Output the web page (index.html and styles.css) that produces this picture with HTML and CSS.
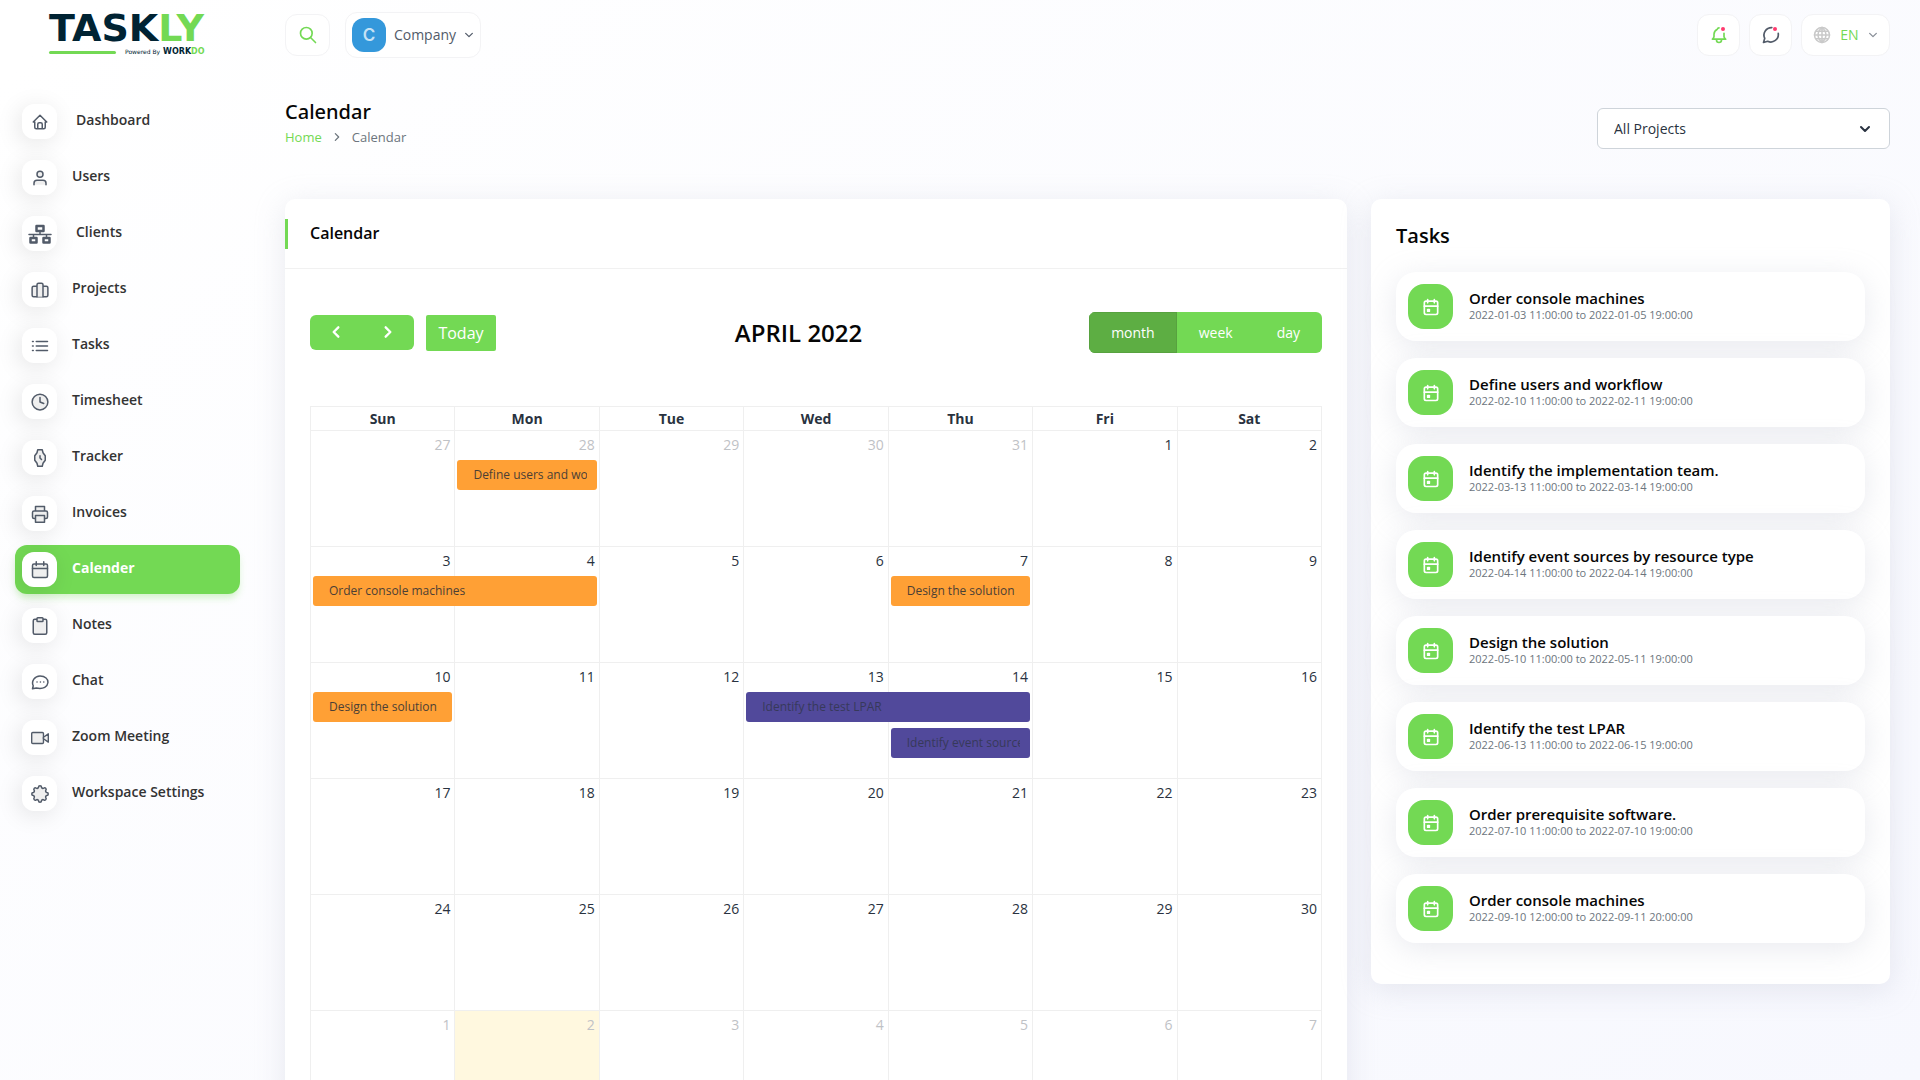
FILE: index.html
```
<!DOCTYPE html>
<html lang="en">
<head>
    <meta charset="utf-8">
    <title>Taskly - Calendar</title>
    <link rel="stylesheet" href="styles.css">
</head>
<body>
    <!-- icon set -->
    <svg class="sprite" aria-hidden="true">
        <symbol id="i-home" viewBox="0 0 24 24"><path d="M5 12H3l9-9 9 9h-2M5 12v7a2 2 0 0 0 2 2h10a2 2 0 0 0 2-2v-7M9 21v-6a2 2 0 0 1 2-2h2a2 2 0 0 1 2 2v6"/></symbol>
        <symbol id="i-user" viewBox="0 0 24 24"><circle cx="12" cy="7" r="4"/><path d="M4 21v-2a4 4 0 0 1 4-4h8a4 4 0 0 1 4 4v2"/></symbol>
        <symbol id="i-network" viewBox="0 0 24 20"><path d="M1 10.500h22M12 7v3.500M5.500 10.500v3M18.500 10.500v3" stroke-width="1.500"/><g fill="#fff" stroke-width="2.500"><rect x="8.500" y="2" width="7" height="5"/><rect x="2.500" y="14" width="6" height="4.500"/><rect x="15.500" y="14" width="6" height="4.500"/></g></symbol>
        <symbol id="i-luggage" viewBox="0 0 24 24"><rect x="1.500" y="7" width="21" height="14" rx="2"/><path d="M8 21V5a2 2 0 0 1 2-2h4a2 2 0 0 1 2 2v16"/></symbol>
        <symbol id="i-list" viewBox="0 0 24 24"><path d="M7 6h15M7 12h15M7 18h15M2 6h1M2 12h1M2 18h1"/></symbol>
        <symbol id="i-clock" viewBox="0 0 24 24"><circle cx="12" cy="12" r="10.500"/><path d="M12 6v6l5 2"/></symbol>
        <symbol id="i-watch" viewBox="0 0 24 24"><path d="M8 5l1-4h6l1 4 3 4v6l-3 4-1 4H9l-1-4-3-4V9zM12 9v3l2 2"/></symbol>
        <symbol id="i-printer" viewBox="0 0 24 24"><path d="M6 8V2h12v6M6 18H4a2 2 0 0 1-2-2v-6a2 2 0 0 1 2-2h16a2 2 0 0 1 2 2v6a2 2 0 0 1-2 2h-2"/><rect x="6" y="14" width="12" height="9"/></symbol>
        <symbol id="i-calendar" viewBox="0 0 24 24"><rect x="2" y="4" width="20" height="18" rx="2"/><path d="M7 1v5M17 1v5M2 10h20"/></symbol>
        <symbol id="i-clipboard" viewBox="0 0 24 24"><rect x="3" y="3" width="18" height="20" rx="2"/><rect x="8" y="1" width="8" height="5" rx="1"/></symbol>
        <symbol id="i-chat" viewBox="0 0 24 24"><path d="M2 21l1-4C0 11 5 4 12 4s11 4 10.500 9S17 22 7 20zM8 12h.1M12.500 12h.1M17 12h.1"/></symbol>
        <symbol id="i-video" viewBox="0 0 26 24"><rect x="1" y="4" width="17" height="16" rx="1.500"/><path d="M18 11l7-5v12l-7-5z"/></symbol>
        <symbol id="i-gear" viewBox="0 0 24 24"><path d="M10 3a2 2 0 0 1 4 0 2 2 0 0 0 3 1.200 2 2 0 0 1 2.800 2.800A2 2 0 0 0 21 10a2 2 0 0 1 0 4 2 2 0 0 0-1.200 3 2 2 0 0 1-2.800 2.800A2 2 0 0 0 14 21a2 2 0 0 1-4 0 2 2 0 0 0-3-1.200A2 2 0 0 1 4.200 17 2 2 0 0 0 3 14a2 2 0 0 1 0-4 2 2 0 0 0 1.200-3A2 2 0 0 1 7 4.200 2 2 0 0 0 10 3z"/></symbol>
        <symbol id="i-event" viewBox="0 0 24 24"><rect x="4" y="5" width="16" height="16" rx="2"/><path d="M8 3v4M16 3v4M4 11h16"/><rect x="8" y="15" width="2" height="2"/></symbol>
        <symbol id="i-search" viewBox="0 0 24 24"><circle cx="10" cy="10" r="7"/><path d="M21 21l-6-6"/></symbol>
        <symbol id="i-bell" viewBox="0 0 24 24"><path d="M12 3.500a2 2 0 0 0-2 1.500 7 7 0 0 0-4 6v3a4 4 0 0 1-2 3h16a4 4 0 0 1-2-3v-4M9 17v1a3 3 0 0 0 6 0v-1"/></symbol>
        <symbol id="i-bubble" viewBox="0 0 24 24"><path d="M13 3.100A9 9 0 0 0 4.500 16L3 21l5-1.500A9 9 0 0 0 20.700 10"/></symbol>
        <symbol id="i-globe" viewBox="0 0 24 24"><circle cx="12" cy="12" r="10"/><path d="M2 12h20M4 7h16M4 17h16M12 2v20M12 2c-7 6-7 14 0 20M12 2c7 6 7 14 0 20"/></symbol>
        <symbol id="i-down" viewBox="0 0 24 24"><path d="M4 8l8 8 8-8"/></symbol>
        <symbol id="i-left" viewBox="0 0 24 24"><path d="M16 4l-8 8 8 8"/></symbol>
        <symbol id="i-right" viewBox="0 0 24 24"><path d="M8 4l8 8-8 8"/></symbol>
    </svg>

    <div class="app">
        <!-- sidebar -->
        <aside class="sidebar">
            <a class="logo" href="#">
                <span class="logo-name">TASK<b>LY</b></span>
                <span class="logo-sub"><i></i><span>Powered By</span><strong>WORK<b>DO</b></strong></span>
            </a>
            <nav class="menu">
                <a class="menu-item spaced" href="#"><span class="menu-icon"><svg class="outline"><use href="#i-home"/></svg></span><span>Dashboard</span></a>
                <a class="menu-item" href="#"><span class="menu-icon"><svg><use href="#i-user"/></svg></span><span>Users</span></a>
                <a class="menu-item spaced" href="#"><span class="menu-icon"><svg class="wide"><use href="#i-network"/></svg></span><span>Clients</span></a>
                <a class="menu-item" href="#"><span class="menu-icon"><svg><use href="#i-luggage"/></svg></span><span>Projects</span></a>
                <a class="menu-item" href="#"><span class="menu-icon"><svg><use href="#i-list"/></svg></span><span>Tasks</span></a>
                <a class="menu-item" href="#"><span class="menu-icon"><svg><use href="#i-clock"/></svg></span><span>Timesheet</span></a>
                <a class="menu-item" href="#"><span class="menu-icon"><svg><use href="#i-watch"/></svg></span><span>Tracker</span></a>
                <a class="menu-item" href="#"><span class="menu-icon"><svg><use href="#i-printer"/></svg></span><span>Invoices</span></a>
                <a class="menu-item active" href="#"><span class="menu-icon"><svg><use href="#i-calendar"/></svg></span><span>Calender</span></a>
                <a class="menu-item" href="#"><span class="menu-icon"><svg><use href="#i-clipboard"/></svg></span><span>Notes</span></a>
                <a class="menu-item" href="#"><span class="menu-icon"><svg class="outline"><use href="#i-chat"/></svg></span><span>Chat</span></a>
                <a class="menu-item" href="#"><span class="menu-icon"><svg><use href="#i-video"/></svg></span><span>Zoom Meeting</span></a>
                <a class="menu-item" href="#"><span class="menu-icon"><svg><use href="#i-gear"/></svg></span><span>Workspace Settings</span></a>
            </nav>
        </aside>

        <div class="content">
            <!-- top bar -->
            <header class="topbar">
                <button class="top-btn search" aria-label="Search"><svg><use href="#i-search"/></svg></button>
                <button class="top-btn company"><span class="avatar">C</span>Company<svg class="chevron"><use href="#i-down"/></svg></button>
                <div class="top-right">
                    <button class="top-btn bell" aria-label="Notifications"><svg><use href="#i-bell"/></svg><span class="dot"></span></button>
                    <button class="top-btn" aria-label="Messages"><svg><use href="#i-bubble"/></svg><span class="dot"></span></button>
                    <button class="top-btn lang"><svg class="globe"><use href="#i-globe"/></svg>EN<svg class="chevron"><use href="#i-down"/></svg></button>
                </div>
            </header>

            <div class="page-header">
                <div>
                    <h1>Calendar</h1>
                    <div class="breadcrumb"><a href="#">Home</a><svg><use href="#i-right"/></svg><span>Calendar</span></div>
                </div>
                <div class="project-select">
                    <select aria-label="Project">
                        <option>All Projects</option>
                    </select>
                    <svg><use href="#i-down"/></svg>
                </div>
            </div>

            <main class="row">
                <section class="card calendar-card">
                    <div class="card-header"><h2>Calendar</h2></div>
                    <div class="card-body">
                        <div class="toolbar">
                            <div class="toolbar-left">
                                <div class="btn-group arrows">
                                    <button aria-label="Previous"><svg><use href="#i-left"/></svg></button>
                                    <button aria-label="Next"><svg><use href="#i-right"/></svg></button>
                                </div>
                                <button class="today-btn">Today</button>
                            </div>
                            <h3>APRIL 2022</h3>
                            <div class="btn-group views">
                                <button class="active">month</button>
                                <button>week</button>
                                <button>day</button>
                            </div>
                        </div>

                        <table class="calendar">
                            <thead>
                                <tr><th>Sun</th><th>Mon</th><th>Tue</th><th>Wed</th><th>Thu</th><th>Fri</th><th>Sat</th></tr>
                            </thead>
                            <tbody>
                                <tr>
                                    <td class="other">27</td>
                                    <td class="other">28<a class="event orange" href="#"><span>Define users and workflow</span></a></td>
                                    <td class="other">29</td>
                                    <td class="other">30</td>
                                    <td class="other">31</td>
                                    <td>1</td>
                                    <td>2</td>
                                </tr>
                                <tr>
                                    <td>3<a class="event orange two-days" href="#"><span>Order console machines</span></a></td>
                                    <td>4</td>
                                    <td>5</td>
                                    <td>6</td>
                                    <td>7<a class="event orange" href="#"><span>Design the solution</span></a></td>
                                    <td>8</td>
                                    <td>9</td>
                                </tr>
                                <tr>
                                    <td>10<a class="event orange" href="#"><span>Design the solution</span></a></td>
                                    <td>11</td>
                                    <td>12</td>
                                    <td>13<a class="event purple two-days" href="#"><span>Identify the test LPAR</span></a></td>
                                    <td>14<a class="event purple second" href="#"><span>Identify event sources by resource type</span></a></td>
                                    <td>15</td>
                                    <td>16</td>
                                </tr>
                                <tr><td>17</td><td>18</td><td>19</td><td>20</td><td>21</td><td>22</td><td>23</td></tr>
                                <tr><td>24</td><td>25</td><td>26</td><td>27</td><td>28</td><td>29</td><td>30</td></tr>
                                <tr>
                                    <td class="other">1</td>
                                    <td class="other today">2</td>
                                    <td class="other">3</td>
                                    <td class="other">4</td>
                                    <td class="other">5</td>
                                    <td class="other">6</td>
                                    <td class="other">7</td>
                                </tr>
                            </tbody>
                        </table>
                    </div>
                </section>

                <section class="card tasks-card">
                    <h2>Tasks</h2>
                    <ul class="task-list">
                        <li><span class="task-icon"><svg><use href="#i-event"/></svg></span><div><h4>Order console machines</h4><p>2022-01-03 11:00:00 to 2022-01-05 19:00:00</p></div></li>
                        <li><span class="task-icon"><svg><use href="#i-event"/></svg></span><div><h4>Define users and workflow</h4><p>2022-02-10 11:00:00 to 2022-02-11 19:00:00</p></div></li>
                        <li><span class="task-icon"><svg><use href="#i-event"/></svg></span><div><h4>Identify the implementation team.</h4><p>2022-03-13 11:00:00 to 2022-03-14 19:00:00</p></div></li>
                        <li><span class="task-icon"><svg><use href="#i-event"/></svg></span><div><h4>Identify event sources by resource type</h4><p>2022-04-14 11:00:00 to 2022-04-14 19:00:00</p></div></li>
                        <li><span class="task-icon"><svg><use href="#i-event"/></svg></span><div><h4>Design the solution</h4><p>2022-05-10 11:00:00 to 2022-05-11 19:00:00</p></div></li>
                        <li><span class="task-icon"><svg><use href="#i-event"/></svg></span><div><h4>Identify the test LPAR</h4><p>2022-06-13 11:00:00 to 2022-06-15 19:00:00</p></div></li>
                        <li><span class="task-icon"><svg><use href="#i-event"/></svg></span><div><h4>Order prerequisite software.</h4><p>2022-07-10 11:00:00 to 2022-07-10 19:00:00</p></div></li>
                        <li><span class="task-icon"><svg><use href="#i-event"/></svg></span><div><h4>Order console machines</h4><p>2022-09-10 12:00:00 to 2022-09-11 20:00:00</p></div></li>
                    </ul>
                </section>
            </main>
        </div>
    </div>
</body>
</html>
```
FILE: styles.css
```
:root {
    --green: #73d954;
    --dark: #293240;
    --gray: #525b69;
}
* {
    box-sizing: border-box;
}
body {
    margin: 0;
    font-family: "Open Sans", "Noto Sans", sans-serif;
    font-size: 14px;
    line-height: 20px;
    color: var(--dark);
    background: linear-gradient(141deg, #ffffff 3%, #f7f8fe 100%) fixed;
}
h1, h2, h3, h4, p, ul {
    margin: 0;
    padding: 0;
}
h1, h2, h3, h4 {
    font-weight: 600;
    color: #060606;
}
a {
    text-decoration: none;
    color: inherit;
}
button, select {
    font: inherit;
    color: inherit;
    cursor: pointer;
}
svg {
    fill: none;
    stroke: currentColor;
    stroke-width: 2;
    stroke-linecap: round;
    stroke-linejoin: round;
}
.sprite {
    display: none;
}
.app {
    display: flex;
    height: 100vh;
    overflow: hidden;
}

/* sidebar */
.sidebar {
    flex: 0 0 255px;
    padding: 0 15px;
}
.logo {
    display: block;
    height: 90px;
    padding: 14px 0 0 34px;
    color: #002333;
}
.logo b {
    color: var(--green);
}
.logo-name {
    display: block;
    font: bold 38px/28px "DejaVu Sans", sans-serif;
}
.logo-sub {
    display: flex;
    align-items: center;
    height: 20px;
    font: 6px/8px "DejaVu Sans", sans-serif;
}
.logo-sub i {
    width: 67px;
    height: 3px;
    margin-right: 9px;
    border-radius: 2px;
    background: var(--green);
}
.logo-sub strong {
    margin-left: 3px;
    font-size: 8px;
}
.menu-item {
    display: flex;
    align-items: center;
    height: 49px;
    margin: 7px 0;
    padding: 0 7px;
    border-radius: 12px;
    font-weight: 600;
    color: #333333;
}
.menu-item > span:last-child {
    padding-bottom: 3px;
}
.menu-item.spaced > span:last-child {
    padding-left: 4px;
}
.menu-item.active {
    color: #ffffff;
    font-weight: 700;
    background: var(--green);
    box-shadow: 0 5px 7px -1px rgba(115, 217, 84, 0.3);
}
.menu-icon {
    display: flex;
    align-items: center;
    justify-content: center;
    width: 35px;
    height: 35px;
    margin-right: 15px;
    border-radius: 12px;
    background: #ffffff;
    color: var(--gray);
    box-shadow: -3px 4px 23px rgba(0, 0, 0, 0.1);
}
.menu-icon svg {
    width: 18px;
    height: 18px;
    fill: #efefef;
}
.menu-icon svg.outline {
    fill: none;
}
.menu-icon svg.wide {
    width: 24px;
    height: 20px;
}

/* top bar */
.content {
    flex: 1;
    padding: 0 30px;
}
.topbar {
    display: flex;
    align-items: center;
    height: 70px;
}
.top-btn {
    position: relative;
    display: flex;
    align-items: center;
    justify-content: center;
    width: 43px;
    height: 42px;
    padding: 0;
    border: 1px solid #f3f3f5;
    border-radius: 12px;
    background: #ffffff;
    color: var(--gray);
}
.top-btn svg {
    width: 20px;
    height: 20px;
}
.top-btn svg.chevron {
    width: 10px;
    height: 10px;
    stroke-width: 3;
}
.search {
    width: 45px;
    margin-right: 15px;
}
.search, .top-btn.bell, .top-btn.lang {
    color: var(--green);
}
.company {
    gap: 8px;
    width: 136px;
    height: 46px;
}
.avatar {
    flex: none;
    width: 34px;
    border-radius: 12px;
    background: #3498db;
    color: #c5e2f5;
    font: 600 17px/34px Inter, sans-serif;
}
.top-right {
    display: flex;
    gap: 9px;
    margin-left: auto;
}
.dot {
    position: absolute;
    top: 12px;
    right: 14px;
    width: 4px;
    height: 4px;
    border-radius: 50%;
    background: #ff3a6e;
}
.lang {
    gap: 9px;
    width: 89px;
}
.top-btn.lang .chevron {
    color: #868c96;
}
.top-btn.lang .globe {
    width: 18px;
    height: 18px;
    color: #c9c9c9;
}

/* page title */
.page-header {
    display: flex;
    align-items: flex-end;
    justify-content: space-between;
    margin: 29px 0 50px;
}
.page-header h1 {
    font-family: "Noto Sans", "Open Sans", sans-serif;
    font-size: 20px;
    line-height: 26px;
    font-weight: 500;
}
.breadcrumb {
    display: flex;
    align-items: center;
    gap: 10px;
    height: 24px;
    font-size: 13px;
    color: #6c757d;
}
.breadcrumb a {
    color: var(--green);
}
.breadcrumb svg {
    width: 10px;
    height: 10px;
    stroke-width: 3;
}
.project-select {
    position: relative;
    width: 293px;
}
.project-select select {
    appearance: none;
    display: block;
    width: 100%;
    height: 41px;
    padding: 0 16px;
    border: 1px solid #ced4da;
    border-radius: 6px;
    background: #ffffff;
}
.project-select svg {
    position: absolute;
    top: 15px;
    right: 19px;
    width: 12px;
    height: 12px;
    stroke-width: 4;
    pointer-events: none;
}

/* cards */
.row {
    display: grid;
    grid-template-columns: repeat(12, 1fr);
    gap: 24px;
    align-items: start;
}
.card {
    border-radius: 10px;
    background: #ffffff;
    box-shadow: 0 6px 30px rgba(182, 186, 203, 0.3);
}
.calendar-card {
    grid-column: span 8;
}
.tasks-card {
    grid-column: span 4;
    padding: 24px 25px 41px;
}
.card-header {
    display: flex;
    align-items: center;
    height: 70px;
    border-bottom: 1px solid #f1f1f1;
}
.card-header::before {
    content: "";
    width: 3px;
    height: 30px;
    margin-right: 22px;
    background: var(--green);
}
.card-header h2 {
    padding-bottom: 2px;
    font-size: 16px;
}
.card-body {
    padding: 43px 25px 25px;
}

/* calendar */
.toolbar {
    display: flex;
    align-items: center;
    justify-content: space-between;
    margin-bottom: 53px;
}
.toolbar-left {
    display: flex;
    gap: 12px;
    padding-right: 12px;
}
.toolbar h3 {
    font-size: 24px;
}
.toolbar button {
    border: 0;
    background: var(--green);
    color: #ffffff;
}
.btn-group {
    display: flex;
    border-radius: 6px;
    overflow: hidden;
}
.arrows {
    height: 35px;
}
.arrows button {
    display: flex;
    align-items: center;
    justify-content: center;
    width: 52px;
    padding: 0;
}
.arrows svg {
    width: 14px;
    height: 14px;
    stroke-width: 4;
}
.toolbar .today-btn {
    width: 70px;
    height: 36px;
    padding: 0;
    border-radius: 2px;
    font-size: 16px;
}
.views button {
    height: 41px;
    padding: 0 22px;
    font-weight: 500;
}
.views button.active {
    padding: 0 21px;
    background: #5dae43;
    border: 1px solid #57a23f;
}
.calendar {
    width: 100%;
    table-layout: fixed;
    border-collapse: collapse;
}
.calendar th, .calendar td {
    border: 1px solid #efefef;
}
.calendar th {
    height: 24px;
    padding: 0;
    font-weight: 700;
}
.calendar td {
    height: 116px;
    padding: 4px 4px 0 2px;
    text-align: right;
    vertical-align: top;
}
.calendar td.other {
    color: #bfc2c6;
}
.calendar td.today {
    background: #fff8df;
}
.event {
    position: relative;
    z-index: 1;
    display: block;
    height: 30px;
    margin: 5px -2px 0 0;
    padding: 0 10px 0 16px;
    border-radius: 3px;
    font-size: 12px;
    line-height: 30px;
    text-align: left;
    color: #4b3f35;
}
.event span {
    display: block;
    overflow: hidden;
    white-space: nowrap;
}
.event.orange {
    background: #ffa035;
}
.event.purple {
    background: #51499b;
    color: #37395a;
}
.event.two-days {
    width: calc(200% + 9px);
}
.event.second {
    margin-top: 41px;
}

/* tasks */
.tasks-card h2 {
    font-size: 20px;
    line-height: 26px;
}
.task-list {
    display: grid;
    gap: 17px;
    margin-top: 23px;
    list-style: none;
}
.task-list li {
    display: flex;
    align-items: center;
    gap: 16px;
    height: 69px;
    padding: 0 12px;
    border-radius: 20px;
    background: #ffffff;
    box-shadow: 0 6px 30px rgba(182, 186, 203, 0.3);
}
.task-icon {
    display: flex;
    align-items: center;
    justify-content: center;
    width: 45px;
    height: 45px;
    border-radius: 16px;
    background: var(--green);
    color: #ffffff;
}
.task-icon svg {
    width: 20px;
    height: 20px;
}
.task-list h4 {
    font-size: 15px;
    line-height: 18px;
}
.task-list p {
    padding-bottom: 2px;
    font-size: 11px;
    line-height: 15px;
    color: #6c757d;
}
```
